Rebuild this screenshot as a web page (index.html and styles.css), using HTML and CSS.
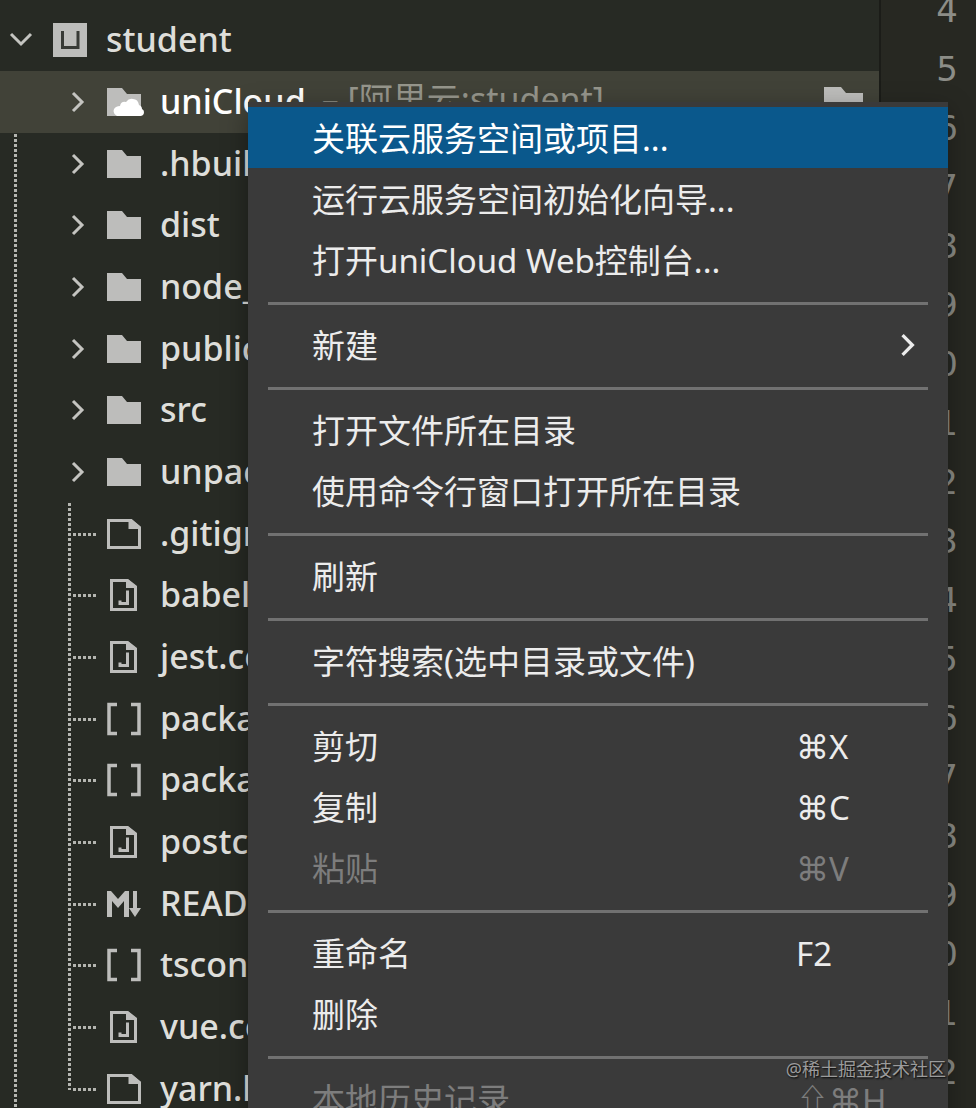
FILE: index.html
```
<!DOCTYPE html>
<html lang="zh-CN">
<head>
  <meta charset="UTF-8">
  <meta name="viewport" content="width=device-width, initial-scale=1.0">
  <title>student</title>
  <link rel="stylesheet" href="styles.css">
</head>
<body>
  <!-- Shared icons -->
  <svg class="sprite" aria-hidden="true">
    <symbol id="chevron" viewBox="0 0 14 22"><path d="M2 2l9 9-9 9" fill="none" stroke="currentColor" stroke-width="3"/></symbol>
    <symbol id="folder" viewBox="0 0 34 34"><path d="M0 3h15l5 6h14v22H0z" fill="currentColor"/></symbol>
    <symbol id="file" viewBox="0 0 34 34"><path d="M1.500 3.500h22.500l8.500 7v20h-31z" fill="none" stroke="currentColor" stroke-width="3"/><path d="M21.500 2h3l9 8v2h-12z" fill="currentColor"/></symbol>
    <symbol id="js" viewBox="0 0 34 34"><path d="M4.500 2.500h15.500l8.500 7v22h-24z" fill="none" stroke="currentColor" stroke-width="3"/><path d="M19 1h2l9 7v2H19z" fill="currentColor"/><path d="M20.500 12.500v13h-7.500v-3" fill="none" stroke="currentColor" stroke-width="3"/></symbol>
    <symbol id="json" viewBox="0 0 34 34"><path d="M10 2.500H2v29h8M24 2.500h8v29h-8" fill="none" stroke="currentColor" stroke-width="3.500"/></symbol>
    <symbol id="md" viewBox="0 0 34 34"><path d="M0 30V4h4l7 8 7-8h4v26h-5V14l-6 7-6-7v16z" fill="currentColor"/><path d="M26 4h4v17h4l-6 9-6-9h4z" fill="currentColor"/></symbol>
  </svg>

  <div class="app">
    <nav class="sidebar">
      <button class="row root">
        <svg class="arrow-down" viewBox="0 0 24 16"><path d="M2 2l10 10L22 2" fill="none" stroke="currentColor" stroke-width="3"/></svg>
        <svg class="icon" viewBox="0 0 34 34"><path d="M0 0h34v34H0z" fill="currentColor"/><path d="M9.500 8v16.500h15.500V8" fill="none" stroke="#383a36" stroke-width="3"/></svg>
        <span class="name">student</span>
      </button>
      <div class="nested">
        <ul class="folders">
          <li><button class="row selected">
            <svg class="chevron"><use href="#chevron"/></svg>
            <svg class="icon" viewBox="0 0 34 34"><path d="M0 3h15l5 6h14v22H0z" fill="currentColor"/><path d="M10 31a5 5 0 0 1-1-9q2-1 4-1 1-5 6-4 3-4 7-3 5 0 6 6 3 1 3 4 2 1 2 3 0 4-4 4z" fill="#fff"/></svg>
            <span class="name">uniCloud</span>
            <span class="space">– [阿里云:student]</span>
            <svg class="space-icon" viewBox="0 0 39 34"><path d="M0 2h17l5 6h17v26H0z" fill="currentColor"/></svg>
          </button></li>
          <li><button class="row"><svg class="chevron"><use href="#chevron"/></svg><svg class="icon"><use href="#folder"/></svg><span class="name">.hbuilderx</span></button></li>
          <li><button class="row"><svg class="chevron"><use href="#chevron"/></svg><svg class="icon"><use href="#folder"/></svg><span class="name">dist</span></button></li>
          <li><button class="row"><svg class="chevron"><use href="#chevron"/></svg><svg class="icon"><use href="#folder"/></svg><span class="name">node_modules</span></button></li>
          <li><button class="row"><svg class="chevron"><use href="#chevron"/></svg><svg class="icon"><use href="#folder"/></svg><span class="name">public</span></button></li>
          <li><button class="row"><svg class="chevron"><use href="#chevron"/></svg><svg class="icon"><use href="#folder"/></svg><span class="name">src</span></button></li>
          <li><button class="row"><svg class="chevron"><use href="#chevron"/></svg><svg class="icon"><use href="#folder"/></svg><span class="name">unpackage</span></button></li>
        </ul>
        <ul class="files">
          <li><button class="row"><svg class="icon"><use href="#file"/></svg><span class="name">.gitignore</span></button></li>
          <li><button class="row"><svg class="icon"><use href="#js"/></svg><span class="name">babel.config.js</span></button></li>
          <li><button class="row"><svg class="icon"><use href="#js"/></svg><span class="name">jest.config.js</span></button></li>
          <li><button class="row"><svg class="icon"><use href="#json"/></svg><span class="name">package-lock.json</span></button></li>
          <li><button class="row"><svg class="icon"><use href="#json"/></svg><span class="name">package.json</span></button></li>
          <li><button class="row"><svg class="icon"><use href="#js"/></svg><span class="name">postcss.config.js</span></button></li>
          <li><button class="row"><svg class="icon"><use href="#md"/></svg><span class="name">README.md</span></button></li>
          <li><button class="row"><svg class="icon"><use href="#json"/></svg><span class="name">tsconfig.json</span></button></li>
          <li><button class="row"><svg class="icon"><use href="#js"/></svg><span class="name">vue.config.js</span></button></li>
          <li><button class="row"><svg class="icon"><use href="#file"/></svg><span class="name">yarn.lock</span></button></li>
        </ul>
      </div>
    </nav>

    <ol class="gutter">
      <li>4</li><li>5</li><li>6</li><li>7</li><li>8</li><li>9</li><li>10</li>
      <li>11</li><li>12</li><li>13</li><li>14</li><li>15</li><li>16</li><li>17</li>
      <li>18</li><li>19</li><li>20</li><li>21</li><li>22</li>
    </ol>

    <div class="menu" role="menu">
      <button role="menuitem" class="active">关联云服务空间或项目...</button>
      <button role="menuitem">运行云服务空间初始化向导...</button>
      <button role="menuitem">打开uniCloud Web控制台...</button>
      <hr>
      <button role="menuitem">新建<svg class="submenu"><use href="#chevron"/></svg></button>
      <hr>
      <button role="menuitem">打开文件所在目录</button>
      <button role="menuitem">使用命令行窗口打开所在目录</button>
      <hr>
      <button role="menuitem">刷新</button>
      <hr>
      <button role="menuitem">字符搜索(选中目录或文件)</button>
      <hr>
      <button role="menuitem">剪切<kbd><span class="key">⌘</span>X</kbd></button>
      <button role="menuitem">复制<kbd><span class="key">⌘</span>C</kbd></button>
      <button role="menuitem" disabled>粘贴<kbd><span class="key">⌘</span>V</kbd></button>
      <hr>
      <button role="menuitem">重命名<kbd>F2</kbd></button>
      <button role="menuitem">删除</button>
      <hr>
      <button role="menuitem" disabled>本地历史记录<kbd>⇧<span class="key">⌘</span>H</kbd></button>
    </div>

    <div class="watermark">@稀土掘金技术社区</div>
  </div>
</body>
</html>
```
FILE: styles.css
```
* {
  box-sizing: border-box;
}
body {
  margin: 0;
  background: #272822;
  color: #dededa;
  font-family: "Noto Sans", "Noto Sans CJK SC", sans-serif;
  font-size: 34px;
}
button {
  border: 0;
  background: none;
  color: inherit;
  font: inherit;
  text-align: left;
  cursor: pointer;
}
ul, ol {
  list-style: none;
  margin: 0;
  padding: 0;
}
.sprite {
  display: none;
}
.app {
  position: relative;
  display: flex;
  height: 100vh;
  overflow: hidden;
}

/* File tree */
.sidebar {
  flex: 1;
  min-width: 0;
  padding-top: 9px;
  background: #272a24;
  font-weight: 500;
}
.row {
  display: flex;
  align-items: center;
  width: 100%;
  height: 62px;
  padding: 0 16px 0 71px;
  white-space: nowrap;
}
.row.root {
  padding-left: 9px;
}
.folders li:nth-child(3n+2) .row,
.files li:nth-child(3n+1) .row {
  height: 61px;
}
.row.selected {
  background: #414238;
  color: #fff;
}
.icon {
  flex: none;
  width: 34px;
  height: 34px;
  margin-right: 19px;
  color: #bdbdbb;
  overflow: visible;
}
.chevron {
  flex: none;
  width: 14px;
  height: 22px;
  margin-right: 22px;
  color: #c4c4c0;
}
.arrow-down {
  flex: none;
  width: 24px;
  height: 16px;
  margin-right: 20px;
  color: #c4c4c0;
}
.name {
  padding-bottom: 2px;
}
.space {
  margin-left: 16px;
  padding-bottom: 9px;
  color: #96968c;
  font-weight: 400;
}
.space-icon {
  width: 39px;
  height: 34px;
  margin-left: auto;
  color: #bdbdbb;
}

/* Dotted guide lines */
.nested {
  background: repeating-linear-gradient(#b4b5b0 0 3px, transparent 3px 5px) 14px 63px / 3px 100% no-repeat;
}
.files {
  background: repeating-linear-gradient(#b4b5b0 0 3px, transparent 3px 5px) 68px 0 / 3px calc(100% - 29px) no-repeat;
}
.files .row {
  padding-left: 107px;
  background: repeating-linear-gradient(to right, #b4b5b0 0 3px, transparent 3px 5px) 73px 30px / 23px 3px no-repeat;
}

/* Line numbers */
.gutter {
  width: 97px;
  padding-right: 18px;
  border-left: 2px solid #1b1c18;
  color: #8c8d87;
  font-family: "DejaVu Sans", sans-serif;
  text-align: right;
}
.gutter li {
  height: 59px;
  line-height: 20px;
}

/* Context menu */
.menu {
  position: absolute;
  top: 102px;
  left: 248px;
  right: 28px;
  padding-top: 5px;
  background: #3a3a3a;
  color: #ececec;
  font-size: 33px;
  box-shadow: 0 8px 24px rgba(0, 0, 0, 0.35);
}
.menu button {
  display: flex;
  align-items: center;
  width: 100%;
  height: 61px;
  padding: 0 32px 2px 64px;
  white-space: nowrap;
}
.menu .active {
  background: #0a588c;
  color: #fff;
}
.menu button:disabled {
  color: #7d7d7d;
}
.menu hr {
  height: 3px;
  margin: 12px 20px 9px;
  border: 0;
  background: #717171;
}
.menu kbd {
  width: 120px;
  margin-left: auto;
  padding-top: 3px;
  font: inherit;
}
.menu .key {
  font-family: "DejaVu Sans", sans-serif;
}
.menu .submenu {
  width: 16px;
  height: 24px;
  margin: 2px 0 0 auto;
}
.watermark {
  position: absolute;
  right: 30px;
  bottom: 27px;
  color: #9b9b9b;
  font-size: 18px;
  text-shadow: 1px 1px 2px #000;
}
```
